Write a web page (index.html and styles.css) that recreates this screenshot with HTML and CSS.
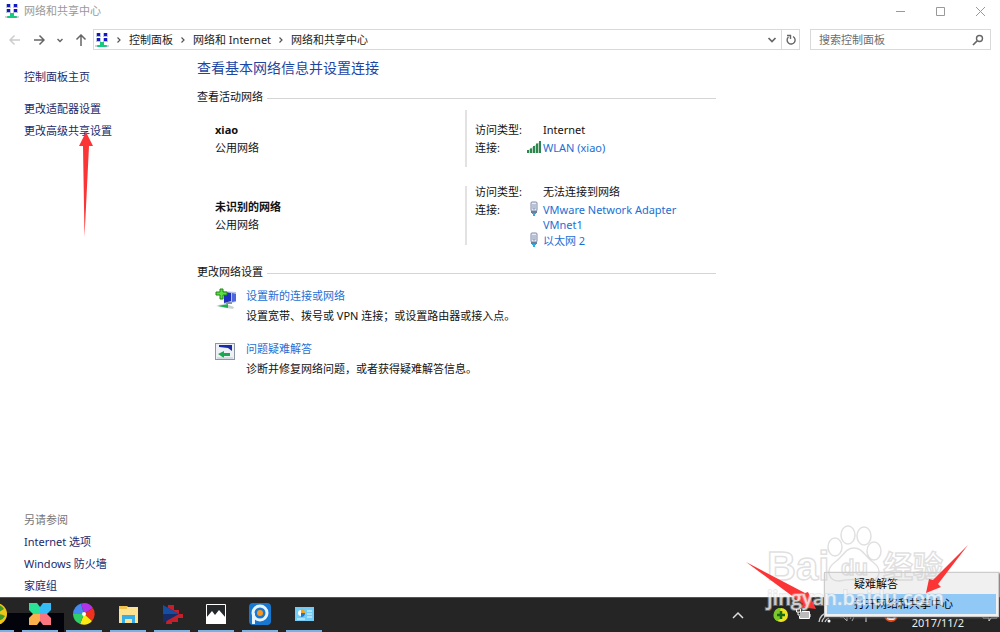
FILE: index.html
```
<!DOCTYPE html>
<html lang="zh-CN">

<head>
    <meta charset="utf-8">
    <title>网络和共享中心</title>
    <link rel="stylesheet" href="styles.css">
</head>

<body>
    <svg class="defs" aria-hidden="true">
        <symbol id="center" viewBox="0 0 14 16">
            <path d="M1 1h5v4H1zM8 1h5v4H8zM1 6h5v4H1zM8 6h5v4H8z" fill="#b9c6dc" />
            <path d="M2 1h3v3H2zM9 1h3v3H9zM2 6h3v3H2zM9 6h3v3H9z" fill="#1616c8" />
            <path d="M5 10h4v3h3v2H2v-2h3z" fill="#16c97c" />
            <path d="M0 14h3M11 14h3" stroke="#9ab" />
        </symbol>
        <symbol id="chev" viewBox="0 0 6 8">
            <path d="M1.500 1.500L4 4 1.500 6.500" fill="none" stroke="#555" stroke-width="1.2" />
        </symbol>
        <symbol id="down" viewBox="0 0 10 8">
            <path d="M1.500 2L5 5.500 8.500 2" fill="none" stroke="#666" stroke-width="1.700" />
        </symbol>
        <symbol id="plug" viewBox="0 0 8 15">
            <rect x="1" y="1" width="6" height="9" rx="1" fill="#e8ecf5" stroke="#7c88a8" />
            <path d="M3 3v5h2V3" fill="none" stroke="#8b96b4" />
            <path d="M1 10h6v2H1z" fill="#69809d" />
            <path d="M2 12h4v1H5v2H3v-2H2z" fill="#28aee0" />
        </symbol>
    </svg>

    <div class="window">
        <div class="titlebar">
            <svg class="icon"><use href="#center" /></svg>
            <span>网络和共享中心</span>
            <div class="controls">
                <button aria-label="最小化"><svg viewBox="0 0 11 11"><path d="M1 5.500h9" /></svg></button>
                <button aria-label="最大化"><svg viewBox="0 0 11 11"><path d="M1.500 1.500h8v8h-8z" /></svg></button>
                <button aria-label="关闭"><svg viewBox="0 0 11 11"><path d="M1 1l9 9M10 1l-9 9" /></svg></button>
            </div>
        </div>

        <div class="navbar">
            <div class="arrows">
                <button class="off" aria-label="后退"><svg viewBox="0 0 12 12"><path d="M11 6H1M5.500 1.500L1 6l4.500 4.500" /></svg></button>
                <button aria-label="前进"><svg viewBox="0 0 12 12"><path d="M1 6h10M6.500 1.500L11 6l-4.500 4.500" /></svg></button>
                <button class="small" aria-label="最近"><svg viewBox="0 0 6 6"><path d="M0.500 2L3 4.500 5.500 2" /></svg></button>
                <button aria-label="向上"><svg viewBox="0 0 12 12"><path d="M6 12V1M1.500 5.500L6 1l4.500 4.500" /></svg></button>
            </div>
            <div class="address">
                <svg class="icon"><use href="#center" /></svg>
                <svg class="chev"><use href="#chev" /></svg>
                <a href="#">控制面板</a>
                <svg class="chev"><use href="#chev" /></svg>
                <a href="#">网络和 Internet</a>
                <svg class="chev"><use href="#chev" /></svg>
                <a href="#">网络和共享中心</a>
                <button class="drop" aria-label="历史记录"><svg><use href="#down" /></svg></button>
                <button class="refresh" aria-label="刷新"><svg viewBox="0 0 12 12"><path d="M3.500 3A4 4 0 1 0 8 2.500M2 1.500h3.500V5" fill="none" stroke="#666" stroke-width="1.400" /></svg></button>
            </div>
            <form class="search">
                <input type="text" placeholder="搜索控制面板" aria-label="搜索控制面板">
                <button type="button" aria-label="搜索"><svg viewBox="0 0 12 12"><path d="M5 7L1 11" stroke="#666" stroke-width="1.700" /><circle cx="7.500" cy="4.500" r="3" fill="none" stroke="#666" stroke-width="1.400" /></svg></button>
            </form>
        </div>

        <div class="body">
            <div class="sidebar">
                <a class="home" href="#">控制面板主页</a>
                <a href="#">更改适配器设置</a>
                <a class="pointed" href="#">更改高级共享设置
                    <svg class="arrow-up" viewBox="0 0 14 105"><path d="M7 0l7 14-4 0L5.500 105 4 14H0z" fill="#fb3535" /></svg>
                </a>
                <div class="see-also">
                    <span>另请参阅</span>
                    <a href="#">Internet 选项</a>
                    <a href="#">Windows 防火墙</a>
                    <a href="#">家庭组</a>
                </div>
            </div>

            <div class="main">
                <h1>查看基本网络信息并设置连接</h1>
                <h2>查看活动网络</h2>

                <div class="network">
                    <div class="name"><b>xiao</b><span>公用网络</span></div>
                    <div class="line"></div>
                    <div class="details">
                        <span>访问类型:</span>
                        <span class="value">Internet</span>
                        <span>连接:</span>
                        <svg class="signal" viewBox="0 0 14 12"><path d="M0 12v-2l14-10v12z" fill="#b5d9be" /><path d="M0 12V9h2v3zM3 12V7.500h2V12zM6 12V5h2v7zM9 12V2.500h2V12zM12 12V0h2v12z" fill="#2f8550" /></svg>
                        <a href="#">WLAN (xiao)</a>
                    </div>
                </div>

                <div class="network">
                    <div class="name"><b>未识别的网络</b><span>公用网络</span></div>
                    <div class="line"></div>
                    <div class="details">
                        <span>访问类型:</span>
                        <span class="value">无法连接到网络</span>
                        <span>连接:</span>
                        <svg class="plug"><use href="#plug" /></svg>
                        <a href="#">VMware Network Adapter VMnet1</a>
                        <svg class="plug second"><use href="#plug" /></svg>
                        <a href="#">以太网 2</a>
                    </div>
                </div>

                <h2 class="change">更改网络设置</h2>
                <div class="task">
                    <svg viewBox="0 0 22 22">
                        <path d="M8 3l13 1v10l-12 2z" fill="#b8c4e8" />
                        <path d="M9 4l7 1v8l-7 2z" fill="#1d2fc0" />
                        <path d="M17 5l4 1v7l-4 1z" fill="#4f67dc" />
                        <path d="M11 14h6v2h-6z" fill="#8793ad" />
                        <path d="M1 18q8-4 18 1l-1 2q-8-1-17-3z" fill="#c9d3cf" />
                        <path d="M3 18l10-2v4z" fill="#18b04d" />
                        <path d="M5 1h3v3h4v3H8v4H5V7H1V4h4z" fill="#5fdb45" stroke="#218516" />
                    </svg>
                    <div>
                        <a href="#">设置新的连接或网络</a>
                        <p>设置宽带、拨号或 VPN 连接；或设置路由器或接入点。</p>
                    </div>
                </div>
                <div class="task">
                    <svg viewBox="0 0 22 22">
                        <rect x="0.500" y="2.500" width="19" height="16" fill="#edf1f5" stroke="#8c97a3" />
                        <path d="M4 4h13v6l-4-3-9-1z" fill="#1b2aa6" />
                        <path d="M3 13l6-3v2h6v3H9v2z" fill="#19a850" />
                        <path d="M2 17h16" stroke="#bcc6cf" />
                    </svg>
                    <div>
                        <a href="#">问题疑难解答</a>
                        <p>诊断并修复网络问题，或者获得疑难解答信息。</p>
                    </div>
                </div>
            </div>
        </div>
    </div>

    <div class="taskbar">
        <div class="apps">
            <button aria-label="浏览器"><svg viewBox="0 0 24 24"><circle cx="12" cy="12" r="11" fill="#f0c419" /><path d="M5 7q10-8 15 0-6 4-9 4zM11 17q6 4 10-3-6-3-10-1z" fill="#3f9a2a" /></svg></button>
            <button aria-label="应用"><svg viewBox="0 0 24 24">
                <path d="M1 1h8l3 4v7H5L1 8z" fill="#2be394" />
                <path d="M23 1h-8l-3 4v7h7l4-4z" fill="#34bdf6" />
                <path d="M1 23h8l3-4v-7H5l-4 4z" fill="#fbb04c" />
                <path d="M23 23h-8l-3-4v-7h7l4 4z" fill="#fb7580" /></svg></button>
            <button aria-label="照片"><svg viewBox="0 0 24 24">
                <path d="M12 12L9 1.500a11 11 0 0 1 12 4.500z" fill="#b133ea" />
                <path d="M12 12l9-6a11 11 0 0 1-1 13z" fill="#f0321c" />
                <path d="M12 12l8 7a11 11 0 0 1-12 3z" fill="#fbe914" />
                <path d="M12 12L8 22a11 11 0 0 1-7-10z" fill="#2ecf68" />
                <path d="M12 12H1A11 11 0 0 1 9 1.500z" fill="#4389ef" />
                <circle cx="12" cy="12" r="2" fill="#fff" /></svg></button>
            <button aria-label="文件资源管理器"><svg viewBox="0 0 24 24"><path d="M3 4h8l1 1h10v16H3z" fill="#fde391" /><path d="M3 4h8v3H3z" fill="#eec250" /><path d="M6 21v-8h13v8h-3v-4H9v4z" fill="#38aee6" /></svg></button>
            <button aria-label="播放器"><svg viewBox="0 0 24 24"><path d="M8 3h6v5h5v4h4v4h-5v4h-6v2H6z" fill="#c71f2a" /><path d="M3 3l16 9-16 9z" fill="#152c68" /><path d="M3 3l16 9H3z" fill="#164fa2" /></svg></button>
            <button aria-label="图片"><svg viewBox="0 0 24 24"><path d="M2.500 2.500h19v19h-19z" fill="#24282b" stroke="#fff" /><path d="M2 16l6-7 3 4 4-5 7 8v6H2z" fill="#fff" /></svg></button>
            <button aria-label="PP"><svg viewBox="0 0 24 24"><rect x="1" y="1" width="22" height="22" rx="4" fill="#1878d0" /><circle cx="12" cy="11" r="7" fill="none" stroke="#e5f4ff" stroke-width="3" /><path d="M4 11h3v11H4z" fill="#e5f4ff" /><circle cx="12" cy="11" r="3" fill="#ff9619" /></svg></button>
            <button aria-label="控制面板"><svg viewBox="0 0 24 24"><rect x="3" y="5" width="19" height="14" fill="#72ccf5" /><circle cx="9" cy="11" r="3" fill="#fff" /><path d="M9 11V7a4 4 0 0 1 4 4z" fill="#f6a51b" /><path d="M9 11h4a4 4 0 0 1-4 4z" fill="#2378c2" /><path d="M15 9h5M15 12h5M15 15h5M5 17h8" stroke="#e6f8ff" /></svg></button>
        </div>

        <div class="tray">
            <svg class="caret" viewBox="0 0 12 8"><path d="M1 7l5-5 5 5" fill="none" stroke="#ddd" stroke-width="1.500" /></svg>
            <svg viewBox="0 0 16 16"><circle cx="8" cy="8" r="7" fill="#eee31f" /><path d="M8 1a7 7 0 0 0-4 13q6-3 4-6t0-7" fill="#7cc92b" /><path d="M8 4v8M4 8h8" stroke="#176b16" stroke-width="2.500" /></svg>
            <svg viewBox="0 0 16 16"><path d="M5 5h9v6H5z" fill="#bbb" /><path d="M6.500 4.500h8v7h-10V9M15 7v3M1.500 2v3h4V2M3 5v3h2" fill="none" stroke="#fff" /></svg>
            <svg viewBox="0 0 16 16"><path d="M2 15Q3 7 12 5M5 15q1-5 7-7M8 15q1-3 4-4" fill="none" stroke="#ccc" stroke-width="1.300" /><circle cx="12" cy="14" r="1.500" fill="#fff" /></svg>
            <svg viewBox="0 0 16 16"><path d="M1 7h3l4-4v11l-4-4H1zM11 5q3 4 0 7M13 3q4 5 0 11" fill="none" stroke="#aaa" /></svg>
            <svg viewBox="0 0 16 16"><path d="M5 3v12" stroke="#ddd" /></svg>
            <svg viewBox="0 0 16 16"><circle cx="8" cy="8" r="7" fill="#e94b19" /><path d="M4 11q8 3 8-2" fill="none" stroke="#fff" stroke-width="2" /></svg>
            <time>2017/11/2</time>
            <svg viewBox="0 0 16 16"><path d="M1 2h14v9H9l-2 3v-3H1z" fill="none" stroke="#ccc" /></svg>
        </div>
    </div>

    <div class="menu">
        <button>疑难解答</button>
        <button class="active">打开网络和共享中心</button>
    </div>

    <svg class="overlay" viewBox="740 512 260 120">
        <g class="mark">
            <text class="big" x="767" y="580">Bai</text>
            <ellipse cx="835" cy="547" rx="7" ry="9" />
            <ellipse cx="848" cy="535" rx="7" ry="9" />
            <ellipse cx="864" cy="536" rx="7" ry="9" />
            <ellipse cx="874" cy="551" rx="7" ry="9" />
            <path d="M854 548c-9 0-11 9-20 15-9 7-5 18 5 18q15-3 29 0c11 1 15-11 6-18-9-6-11-15-20-15z" />
            <text class="du" x="841" y="575">du</text>
            <text class="cn" x="883" y="577">经验</text>
        </g>
        <g fill="#fb3535">
            <path d="M746 562l59 31 3-1 8 17-16-2 3-3z" />
            <path d="M968 545l-30 39 3 3-15 6 3-14 4 1z" />
        </g>
        <text class="site" x="767" y="605">jingyan.baidu.com</text>
    </svg>
</body>

</html>
```

FILE: styles.css
```
* {
    box-sizing: border-box;
}

body {
    margin: 0;
    height: 100vh;
    display: flex;
    flex-direction: column;
    position: relative;
    overflow: hidden;
    background-color: #fff;
    color: #111;
    font-family: "Noto Sans", "Noto Sans CJK SC", sans-serif;
    font-size: 11px;
    line-height: 18px;
}

a {
    text-decoration: none;
    color: #1a6fd4;
}

a:hover {
    text-decoration: underline;
}

button {
    display: flex;
    align-items: center;
    justify-content: center;
    padding: 0;
    border: 0;
    background: none;
    font: inherit;
    color: inherit;
}

svg {
    flex: none;
}

.defs {
    position: absolute;
    width: 0;
    height: 0;
}

.window {
    flex: 1;
    display: flex;
    flex-direction: column;
    min-height: 0;
}

/* title bar */
.titlebar {
    display: flex;
    align-items: center;
    height: 22px;
    padding-left: 5px;
    color: #999;
}

.icon {
    width: 14px;
    height: 16px;
    margin-right: 5px;
}

.controls {
    display: flex;
    margin-left: auto;
}

.controls button {
    width: 40px;
    height: 22px;
}

.controls svg {
    width: 11px;
    height: 11px;
    fill: none;
    stroke: #999;
}

/* address bar */
.navbar {
    display: flex;
    margin-top: 7px;
    padding-right: 9px;
}

.arrows {
    display: flex;
    align-items: center;
    justify-content: space-between;
    width: 93px;
    padding: 0 6px 0 9px;
}

.arrows svg {
    width: 12px;
    height: 12px;
    fill: none;
    stroke: #666;
    stroke-width: 1.5;
}

.arrows .small svg {
    width: 6px;
    height: 6px;
}

.arrows .off svg {
    stroke: #ccc;
}

.address {
    flex: 1;
    display: flex;
    align-items: center;
    height: 21px;
    padding-left: 1px;
    border: 1px solid #d9d9d9;
}

.address a {
    color: #222;
}

.chev {
    width: 6px;
    height: 8px;
    margin: 0 7px;
}

.address .icon {
    margin-right: 0;
}

.drop {
    width: 18px;
    margin-left: auto;
}

.drop svg {
    width: 10px;
    height: 8px;
}

.refresh {
    width: 18px;
    height: 19px;
    border-left: 1px solid #d9d9d9;
}

.refresh svg,
.search svg {
    width: 12px;
    height: 12px;
}

.search {
    display: flex;
    width: 181px;
    height: 21px;
    margin-left: 10px;
    padding: 0 6px 0 8px;
    border: 1px solid #d9d9d9;
}

.search input {
    flex: 1;
    min-width: 0;
    padding: 0;
    border: 0;
    outline: 0;
    font: inherit;
}

.search input::placeholder {
    color: #6d6d6d;
}

/* content */
.body {
    flex: 1;
    display: flex;
    min-height: 0;
}

.sidebar {
    display: flex;
    flex-direction: column;
    align-items: flex-start;
    width: 197px;
    padding: 16px 0 0 24px;
    line-height: 22px;
}

.sidebar a {
    color: #1b2a6b;
}

.sidebar .home {
    margin-bottom: 10px;
}

.pointed {
    position: relative;
}

.arrow-up {
    position: absolute;
    left: 55px;
    top: 12px;
    width: 14px;
    height: 105px;
}

.see-also {
    display: flex;
    flex-direction: column;
    margin-top: auto;
    color: #777;
}

.main {
    flex: 1;
    max-width: 519px;
    padding-top: 8px;
}

h1 {
    margin: 0 0 9px;
    font-size: 14px;
    font-weight: normal;
    line-height: 20px;
    color: #1c46a4;
}

h2 {
    display: flex;
    align-items: center;
    gap: 4px;
    margin: 0;
    font-size: 11px;
    font-weight: normal;
    line-height: 20px;
}

h2::after {
    content: "";
    flex: 1;
    height: 1px;
    margin-top: 3px;
    background-color: #d5d5d5;
}

.change {
    margin: 14px 0 4px;
}

.network {
    display: flex;
    align-items: center;
    min-height: 63px;
    padding-left: 18px;
}

.network + .network {
    margin-top: 13px;
}

.name {
    width: 250px;
    display: flex;
    flex-direction: column;
}

.line {
    align-self: stretch;
    width: 2px;
    margin: 3px 0;
    background-color: #e2e2e2;
}

.details {
    flex: 1;
    display: grid;
    grid-template-columns: 50px 18px 1fr;
    padding-left: 8px;
}

.details .value {
    grid-column: 2 / 4;
    padding-left: 18px;
}

.details a {
    line-height: 15px;
    padding-top: 1px;
}

.signal {
    width: 14px;
    height: 12px;
    margin-top: 2px;
    justify-self: center;
}

.plug {
    width: 8px;
    height: 15px;
    justify-self: center;
}

.second {
    grid-column: 2;
}

.task {
    display: flex;
    gap: 9px;
    padding-left: 18px;
    line-height: 20px;
}

.task + .task {
    margin-top: 13px;
}

.task svg {
    width: 22px;
    height: 22px;
    margin-top: 2px;
}

.task p {
    margin: 0;
}

/* taskbar */
.taskbar {
    display: flex;
    justify-content: space-between;
    height: 35px;
    border-top: 1px solid #555;
    background-color: #252525;
}

.apps {
    display: flex;
    gap: 8px;
    margin-left: -22px;
    background: linear-gradient(#252525 45%, #03030c 45%) no-repeat 0 0 / 86px 100%;
}

.apps button {
    width: 36px;
    border-bottom: 2px solid #76b2e3;
}

.apps svg {
    width: 24px;
    height: 24px;
}

.tray {
    display: flex;
    align-items: center;
    gap: 6px;
    padding-right: 2px;
    color: #eee;
}

.tray svg {
    width: 16px;
    height: 16px;
}

.tray .caret {
    width: 12px;
    height: 8px;
    margin-right: 23px;
}

.tray time {
    align-self: flex-end;
    margin: 0 12px 0 7px;
}

/* network icon menu */
.menu {
    position: absolute;
    right: 1px;
    bottom: 15px;
    width: 175px;
    padding: 1px 2px 2px;
    border: 1px solid #ccc;
    background-color: #f0f0f0;
    box-shadow: 1px 1px 2px #555;
    color: #000;
}

.menu button {
    justify-content: flex-start;
    width: 100%;
    height: 20px;
    padding-left: 27px;
}

.menu .active {
    background-color: #90c8f6;
}

.overlay {
    position: absolute;
    right: 0;
    bottom: 0;
    width: 260px;
    height: 120px;
    pointer-events: none;
}

.mark {
    fill: none;
    stroke: #ccc;
    stroke-opacity: 0.6;
    stroke-width: 1.5;
}

.mark text {
    font-family: "Liberation Sans", "Noto Sans CJK SC", sans-serif;
    font-weight: bold;
}

.big {
    font-size: 40px;
}

.du {
    font-size: 22px;
}

.cn {
    font-size: 30px;
}

.site {
    font-family: "Open Sans", sans-serif;
    font-size: 20px;
    font-weight: 600;
    fill: #fff;
    fill-opacity: 0.7;
    stroke: #ccc;
    stroke-opacity: 0.4;
    stroke-width: 2;
    paint-order: stroke;
}
```
